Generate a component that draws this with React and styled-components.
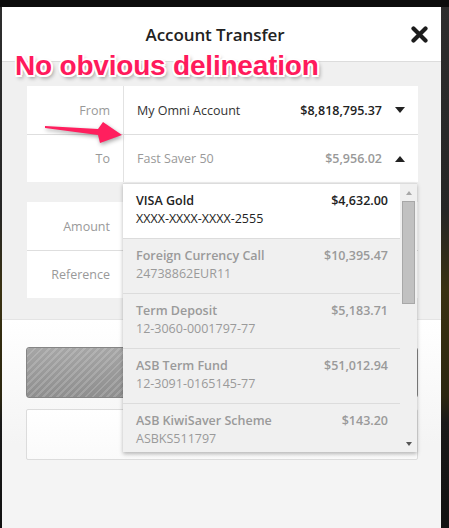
import React from 'react'
import styled, { createGlobalStyle } from 'styled-components'

const GlobalStyles = createGlobalStyle`
  html, body {
    margin: 0;
    padding: 0;
  }

  body {
    width: 449px;
    height: 528px;
    overflow: hidden;
    background: linear-gradient(#2e2e2e 0%, #262626 40%, #3a3212 55%, #2c2710 75%, #1a1a1a 80%, #111 100%);
    font-family: "Open Sans", "Noto Sans", Arial, sans-serif;
  }
`

const Page = styled.div`
  height: 528px;
  box-sizing: border-box;
  padding: 7px 8px 0 2px;
  background: linear-gradient(#0c0c0c 0, #0c0c0c 7px, transparent 7px);
  display: flex;
`

const Modal = styled.div`
  position: relative;
  width: 439px;
  display: flex;
  flex-direction: column;
`

const Header = styled.header`
  height: 54px;
  background: #fff;
  border-bottom: 1px solid #dcdcdc;
  display: grid;
  grid-template-columns: 1fr auto 1fr;
  align-items: center;
  padding: 0 13px 0 0;
`

const Title = styled.h1`
  grid-column: 2;
  margin: 0;
  font-size: 17px;
  font-weight: 600;
  color: #222;
  letter-spacing: -0.1px;
`

const Close = styled.button`
  justify-self: end;
  border: 0;
  padding: 0;
  background: none;
  display: flex;
  cursor: pointer;
`

const Annotation = styled.div`
  position: absolute;
  left: 13px;
  top: 43px;
  font-family: "Liberation Sans", Arial, sans-serif;
  font-weight: bold;
  font-size: 28px;
  letter-spacing: -0.2px;
  color: #ff1a5c;
  text-shadow:
    -1.5px -1.5px 0 #fff, 1.5px -1.5px 0 #fff, -1.5px 1.5px 0 #fff, 1.5px 1.5px 0 #fff,
    0 -2px 0 #fff, 0 2px 0 #fff, -2px 0 0 #fff, 2px 0 0 #fff,
    2px 3px 4px rgba(0, 0, 0, 0.45);
  white-space: nowrap;
`

const Arrow = styled.svg`
  position: absolute;
  left: 38px;
  top: 110px;
  filter: drop-shadow(1px 2px 2px rgba(0, 0, 0, 0.35));
`

const Body = styled.section`
  background: #f0f0f0;
  padding: 24px 23px 21px 25px;
  display: flex;
  flex-direction: column;
  gap: 20px;
`

const Card = styled.div`
  background: #fff;
`

const Row = styled.div`
  position: relative;
  display: grid;
  grid-template-columns: 97px 1fr;
  height: 48px;
  & + & {
    border-top: 1px solid #dedede;
    height: 47px;
  }
`

const Label = styled.div`
  border-right: 1px solid #e2e2e2;
  display: flex;
  align-items: center;
  justify-content: flex-end;
  padding-right: 13px;
  font-size: 12.5px;
  color: #999;
`

const Field = styled.div`
  position: relative;
  display: flex;
  align-items: center;
  padding: 0 13px;
  font-size: 12.5px;
  color: ${p => (p.$muted ? '#999' : '#333')};
`

const Name = styled.span`
  flex: 1;
`

const Balance = styled.span`
  font-weight: 600;
  color: ${p => (p.$muted ? '#999' : '#222')};
  margin-right: 13px;
`

const Caret = styled.span`
  width: 0;
  height: 0;
  border-left: 5px solid transparent;
  border-right: 5px solid transparent;
  ${p => (p.$up
    ? 'border-bottom: 6px solid #222;'
    : 'border-top: 6px solid #222;')}
`

const Dropdown = styled.div`
  position: absolute;
  left: -1px;
  top: 100%;
  margin-top: 1px;
  width: 294px;
  height: 269px;
  z-index: 5;
  display: flex;
  background: #f0f0f0;
  border-top: 1px solid #dcdcdc;
  box-sizing: border-box;
  overflow: hidden;
  box-shadow: 0 2px 4px rgba(0, 0, 0, 0.28);
`

const List = styled.ul`
  list-style: none;
  margin: 0;
  padding: 0;
  flex: 1;
`

const Option = styled.li`
  height: 55px;
  box-sizing: border-box;
  padding: 8px 12px 0 13px;
  border-bottom: 1px solid #dcdcdc;
  background: ${p => (p.$selected ? '#fff' : '#f0f0f0')};
  color: ${p => (p.$selected ? '#222' : '#9a9a9a')};
  font-size: 12.5px;
  line-height: 18px;
`

const OptionTop = styled.div`
  display: flex;
  justify-content: space-between;
  font-weight: 600;
`

const Scrollbar = styled.div`
  width: 17px;
  display: flex;
  flex-direction: column;
  align-items: center;
`

const ScrollArrow = styled.span`
  height: 17px;
  display: flex;
  align-items: center;
  justify-content: center;
  &::after {
    content: '';
    border-left: 3.5px solid transparent;
    border-right: 3.5px solid transparent;
    ${p => (p.$down
      ? 'border-top: 4px solid #555;'
      : 'border-bottom: 4px solid #a8a8a8;')}
  }
`

const Thumb = styled.span`
  width: 13px;
  height: 103px;
  box-sizing: border-box;
  background: #c1c1c1;
  border: 1px solid #a8a8a8;
`

const Spacer = styled.span`
  flex: 1;
`

const Footer = styled.footer`
  flex: 1;
  border-top: 1px solid #e4e4e4;
  background: linear-gradient(#fff, #f4f4f4 60%);
  padding: 27px 23px 0 24px;
  display: flex;
  flex-direction: column;
  gap: 11px;
`

const SubmitButton = styled.button`
  height: 51px;
  border: 1px solid #858585;
  border-radius: 3px;
  background:
    repeating-linear-gradient(135deg, rgba(255, 255, 255, 0.16) 0 2px, transparent 2px 5px),
    linear-gradient(#a6a6a6, #8e8e8e);
`

const CancelBox = styled.div`
  height: 51px;
  box-sizing: border-box;
  border: 1px solid #dcdcdc;
  border-radius: 2px;
  background: linear-gradient(#fff, #fafafa);
`

const accounts = [
  { name: 'VISA Gold', number: 'XXXX-XXXX-XXXX-2555', balance: '$4,632.00', selected: true },
  { name: 'Foreign Currency Call', number: '24738862EUR11', balance: '$10,395.47' },
  { name: 'Term Deposit', number: '12-3060-0001797-77', balance: '$5,183.71' },
  { name: 'ASB Term Fund', number: '12-3091-0165145-77', balance: '$51,012.94' },
  { name: 'ASB KiwiSaver Scheme', number: 'ASBKS511797', balance: '$143.20' },
]

const App = () => {
  return (
    <Page>
      <GlobalStyles />
      <Modal>
        <Header>
          <Title>Account Transfer</Title>
          <Close aria-label="Close">
            <svg width="17" height="17" viewBox="0 0 17 17">
              <path d="M2.5 2.5 L14.5 14.5 M14.5 2.5 L2.5 14.5" stroke="#1c1c1c" strokeWidth="4.2" strokeLinecap="round" />
            </svg>
          </Close>
        </Header>

        <Body>
          <Card>
            <Row>
              <Label>From</Label>
              <Field>
                <Name>My Omni Account</Name>
                <Balance>$8,818,795.37</Balance>
                <Caret />
              </Field>
            </Row>
            <Row>
              <Label>To</Label>
              <Field $muted>
                <Name>Fast Saver 50</Name>
                <Balance $muted>$5,956.02</Balance>
                <Caret $up />
                <Dropdown>
                  <List>
                    {accounts.map(acc => (
                      <Option key={acc.name} $selected={acc.selected}>
                        <OptionTop>
                          <span>{acc.name}</span>
                          <span>{acc.balance}</span>
                        </OptionTop>
                        <div>{acc.number}</div>
                      </Option>
                    ))}
                  </List>
                  <Scrollbar>
                    <ScrollArrow />
                    <Thumb />
                    <Spacer />
                    <ScrollArrow $down />
                  </Scrollbar>
                </Dropdown>
              </Field>
            </Row>
          </Card>

          <Card>
            <Row>
              <Label>Amount</Label>
              <Field />
            </Row>
            <Row>
              <Label>Reference</Label>
              <Field />
            </Row>
          </Card>
        </Body>

        <Footer>
          <SubmitButton />
          <CancelBox />
        </Footer>

        <Annotation>No obvious delineation</Annotation>
        <Arrow width="90" height="32" viewBox="0 0 90 32">
          <polygon points="5,9 58,12 63,5 82,18 60,26 58,18 5,11" fill="#ff1f5e" />
        </Arrow>
      </Modal>
    </Page>
  )
}

export default App
